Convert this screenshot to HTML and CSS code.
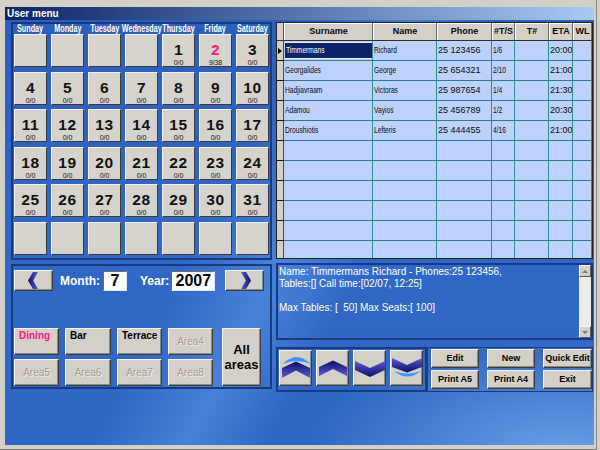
FILE: index.html
```html
<!DOCTYPE html>
<html>
<head>
<meta charset="utf-8">
<link rel="stylesheet" href="styles.css">
</head>
<body>
<div class="window">
  <div class="titlebar">User menu</div>
  <div class="content">
    <div class="leftcol">
      <div class="panel cal">
        <div class="dow">
          <div><span>Sunday</span></div><div><span>Monday</span></div><div><span>Tuesday</span></div><div><span>Wednesday</span></div><div><span>Thursday</span></div><div><span>Friday</span></div><div><span>Saturday</span></div>
        </div>
        <div class="days">
          <div class="day"></div><div class="day"></div><div class="day"></div><div class="day"></div>
          <div class="day"><b class="n">1</b><i class="c">0/0</i></div>
          <div class="day"><b class="n pink">2</b><i class="c">9/38</i></div>
          <div class="day"><b class="n">3</b><i class="c">0/0</i></div>
          <div class="day"><b class="n">4</b><i class="c">0/0</i></div>
          <div class="day"><b class="n">5</b><i class="c">0/0</i></div>
          <div class="day"><b class="n">6</b><i class="c">0/0</i></div>
          <div class="day"><b class="n">7</b><i class="c">0/0</i></div>
          <div class="day"><b class="n">8</b><i class="c">0/0</i></div>
          <div class="day"><b class="n">9</b><i class="c">0/0</i></div>
          <div class="day"><b class="n">10</b><i class="c">0/0</i></div>
          <div class="day"><b class="n">11</b><i class="c">0/0</i></div>
          <div class="day"><b class="n">12</b><i class="c">0/0</i></div>
          <div class="day"><b class="n">13</b><i class="c">0/0</i></div>
          <div class="day"><b class="n">14</b><i class="c">0/0</i></div>
          <div class="day"><b class="n">15</b><i class="c">0/0</i></div>
          <div class="day"><b class="n">16</b><i class="c">0/0</i></div>
          <div class="day"><b class="n">17</b><i class="c">0/0</i></div>
          <div class="day"><b class="n">18</b><i class="c">0/0</i></div>
          <div class="day"><b class="n">19</b><i class="c">0/0</i></div>
          <div class="day"><b class="n">20</b><i class="c">0/0</i></div>
          <div class="day"><b class="n">21</b><i class="c">0/0</i></div>
          <div class="day"><b class="n">22</b><i class="c">0/0</i></div>
          <div class="day"><b class="n">23</b><i class="c">0/0</i></div>
          <div class="day"><b class="n">24</b><i class="c">0/0</i></div>
          <div class="day"><b class="n">25</b><i class="c">0/0</i></div>
          <div class="day"><b class="n">26</b><i class="c">0/0</i></div>
          <div class="day"><b class="n">27</b><i class="c">0/0</i></div>
          <div class="day"><b class="n">28</b><i class="c">0/0</i></div>
          <div class="day"><b class="n">29</b><i class="c">0/0</i></div>
          <div class="day"><b class="n">30</b><i class="c">0/0</i></div>
          <div class="day"><b class="n">31</b><i class="c">0/0</i></div>
          <div class="day"></div><div class="day"></div><div class="day"></div><div class="day"></div><div class="day"></div><div class="day"></div><div class="day"></div>
        </div>
      </div>
      <div class="panel nav">
        <div class="navrow">
          <div class="btn arrowbtn">
            <svg width="10" height="17" viewBox="0 0 10 17"><defs><linearGradient id="gl" x1="0" x2="1" y1="0" y2="0"><stop offset="0" stop-color="#0a0a55"/><stop offset="1" stop-color="#5563e0"/></linearGradient></defs><path d="M5 0H10L5.2 8.5L10 17H5L0 8.5Z" fill="url(#gl)"/></svg>
          </div>
          <span class="lbl">Month:</span>
          <span class="box mbox">7</span>
          <span class="lbl ylbl">Year:</span>
          <span class="box ybox">2007</span>
          <div class="btn arrowbtn rbtn">
            <svg width="10" height="17" viewBox="0 0 10 17"><defs><linearGradient id="gr" x1="0" x2="1" y1="0" y2="0"><stop offset="0" stop-color="#5563e0"/><stop offset="1" stop-color="#0a0a55"/></linearGradient></defs><path d="M0 0H5L10 8.5L5 17H0L4.8 8.5Z" fill="url(#gr)"/></svg>
          </div>
        </div>
        <div class="areas">
          <div class="btn area on pinktxt">Dining</div>
          <div class="btn area on">Bar</div>
          <div class="btn area on">Terrace</div>
          <div class="btn area off">Area4</div>
          <div class="btn all">All<br>areas</div>
          <div class="btn area off">Area5</div>
          <div class="btn area off">Area6</div>
          <div class="btn area off">Area7</div>
          <div class="btn area off">Area8</div>
        </div>
      </div>
    </div>
    <div class="rightcol">
      <div class="tbl">
        <div class="row head">
          <div class="ind"></div><div>Surname</div><div>Name</div><div>Phone</div><div>#T/S</div><div>T#</div><div>ETA</div><div>WL</div>
        </div>
        <div class="row">
          <div class="ind"><span class="tri"></span></div>
          <div class="selcell"><div class="sel"><span class="cn">Timmermans</span></div></div>
          <div><span class="cn">Richard</span></div><div>25 123456</div><div><span class="cn">1/6</span></div><div></div><div>20:00</div><div></div>
        </div>
        <div class="row">
          <div class="ind"></div><div><span class="cn">Georgalides</span></div><div><span class="cn">George</span></div><div>25 654321</div><div><span class="cn">2/10</span></div><div></div><div>21:00</div><div></div>
        </div>
        <div class="row">
          <div class="ind"></div><div><span class="cn">Hadjiavraam</span></div><div><span class="cn">Victoras</span></div><div>25 987654</div><div><span class="cn">1/4</span></div><div></div><div>21:30</div><div></div>
        </div>
        <div class="row">
          <div class="ind"></div><div><span class="cn">Adamou</span></div><div><span class="cn">Vayios</span></div><div>25 456789</div><div><span class="cn">1/2</span></div><div></div><div>20:30</div><div></div>
        </div>
        <div class="row">
          <div class="ind"></div><div><span class="cn">Droushiotis</span></div><div><span class="cn">Lefteris</span></div><div>25 444455</div><div><span class="cn">4/16</span></div><div></div><div>21:00</div><div></div>
        </div>
        <div class="row"><div class="ind"></div><div></div><div></div><div></div><div></div><div></div><div></div><div></div></div>
        <div class="row"><div class="ind"></div><div></div><div></div><div></div><div></div><div></div><div></div><div></div></div>
        <div class="row"><div class="ind"></div><div></div><div></div><div></div><div></div><div></div><div></div><div></div></div>
        <div class="row"><div class="ind"></div><div></div><div></div><div></div><div></div><div></div><div></div><div></div></div>
        <div class="row"><div class="ind"></div><div></div><div></div><div></div><div></div><div></div><div></div><div></div></div>
        <div class="row"><div class="ind"></div><div></div><div></div><div></div><div></div><div></div><div></div><div></div></div>
      </div>
      <div class="panel info">
        <div class="infotext">Name: Timmermans Richard - Phones:25 123456,
Tables:[] Call time:[02/07, 12:25]

Max Tables: [  50] Max Seats:[ 100]</div>
        <div class="sbar">
          <div class="sbtn"><span class="up"></span></div>
          <div class="strack"></div>
          <div class="sbtn"><span class="dn"></span></div>
        </div>
      </div>
      <div class="bottom">
        <div class="panel arrows">
          <div class="btn chev">
            <svg width="31" height="34" viewBox="1 1 31 34"><defs><linearGradient id="g1" x1="0" x2="0" y1="0" y2="1"><stop offset="0" stop-color="#0c0c62"/><stop offset="1" stop-color="#5a5ad8"/></linearGradient></defs><path d="M4 14Q17.5 0 31.5 14Q17.5 8 4 14Z" fill="#3b95ff"/><path d="M3 18L17 11.5L31 18V28L17 20.5L3 28Z" fill="url(#g1)"/></svg>
          </div>
          <div class="btn chev">
            <svg width="31" height="34" viewBox="1 1 31 34"><defs><linearGradient id="g2" x1="0" x2="0" y1="0" y2="1"><stop offset="0" stop-color="#0c0c62"/><stop offset="1" stop-color="#5a5ad8"/></linearGradient></defs><path d="M3 17L17 10.5L31 17V26L17 19L3 26Z" fill="url(#g2)"/></svg>
          </div>
          <div class="btn chev">
            <svg width="31" height="34" viewBox="1 1 31 34"><defs><linearGradient id="g3" x1="0" x2="0" y1="0" y2="1"><stop offset="0" stop-color="#5a5ad8"/><stop offset="1" stop-color="#0c0c62"/></linearGradient></defs><path d="M2 11L17 18L32 11V20L17 27L2 20Z" fill="url(#g3)"/></svg>
          </div>
          <div class="btn chev">
            <svg width="31" height="34" viewBox="1 1 31 34"><defs><linearGradient id="g4" x1="0" x2="0" y1="0" y2="1"><stop offset="0" stop-color="#5a5ad8"/><stop offset="1" stop-color="#0c0c62"/></linearGradient></defs><path d="M2 8L17 15L32 8V17L17 22.5L2 17Z" fill="url(#g4)"/><path d="M4 21Q17 32 31 21Q17 26 4 21Z" fill="#3b95ff"/></svg>
          </div>
        </div>
        <div class="panel cmds">
          <div class="btn cmd">Edit</div>
          <div class="btn cmd">New</div>
          <div class="btn cmd">Quick Edit</div>
          <div class="btn cmd">Print A5</div>
          <div class="btn cmd">Print A4</div>
          <div class="btn cmd">Exit</div>
        </div>
      </div>
    </div>
  </div>
</div>
</body>
</html>
```
FILE: styles.css
```css
* { box-sizing: border-box; margin: 0; padding: 0; }
body {
  width: 600px; height: 450px; overflow: hidden;
  background: #d4d0c8;
  font-family: "Liberation Sans", Arial, sans-serif;
}
.window {
  height: 450px;
  display: flex; flex-direction: column;
  padding: 7px 6px 5px 5px;
  box-shadow: inset -3px 0 0 #d4d0c8, inset -4px 0 0 #8a8780, inset 0 -1px 0 #77746e;
}
.titlebar {
  height: 13px;
  background: linear-gradient(90deg, #0a246a, #a6caf0);
  color: #fff; font-weight: bold; font-size: 10px; line-height: 13px;
  padding-left: 2px;
}
.content {
  flex: 1;
  display: flex; gap: 4px;
  padding: 2px 0 0 6px;
  background:
    radial-gradient(ellipse 260px 110px at 560px 430px, rgba(150, 205, 255, .55), rgba(150, 205, 255, 0)),
    linear-gradient(118deg, rgba(120, 180, 255, 0) 38%, rgba(120, 180, 255, .35) 50%, rgba(120, 180, 255, 0) 60%),
    linear-gradient(180deg, #2c5ebc 0%, #3168c8 55%, #2f65c4 100%);
}
.leftcol { width: 261px; display: flex; flex-direction: column; gap: 4px; }
.rightcol { width: 317px; display: flex; flex-direction: column; }
.panel { border: 2px solid #173a82; }

/* calendar */
.cal { height: 238px; padding: 0 1px 3px 1px; }
.dow {
  display: grid; grid-template-columns: repeat(7, minmax(0, 1fr)); column-gap: 4px;
  height: 10px;
}
.dow div { display: flex; justify-content: center; min-width: 0; }
.dow span {
  flex: none;
  display: inline-block; color: #fff; font-weight: bold;
  font-size: 10px; line-height: 10px; white-space: nowrap;
  transform: scaleX(.72);
}
.days {
  display: grid; grid-template-columns: repeat(7, minmax(0, 1fr));
  grid-template-rows: repeat(6, 33px); gap: 4.6px 4px;
}
.day {
  background: #d6d3cc;
  border: 1px solid; border-color: #f2f0ea #3a3a3a #3a3a3a #f2f0ea;
  display: flex; flex-direction: column; justify-content: flex-end; align-items: center;
}
.n { font-size: 15.5px; line-height: 14px; margin-bottom: 2px; font-weight: bold; color: #111; letter-spacing: .6px; }
.n.pink { color: #ff1a8c; }
.c { font-style: normal; font-size: 7px; line-height: 7px; color: #111; letter-spacing: -0.1px; }

/* buttons */
.btn {
  background: #d4d0c8;
  border: 1px solid; border-color: #f6f5f0 #3c3c3c #3c3c3c #f6f5f0;
  box-shadow: inset -1px -1px 0 #8c8983;
}

/* nav */
.nav { height: 125px; display: flex; flex-direction: column; padding: 4px 6px 1px 1px; }
.navrow { display: flex; align-items: center; height: 21px; }
.arrowbtn { width: 39px; height: 21px; display: flex; align-items: center; justify-content: center; }
.arrowbtn svg { margin-left: -2px; }
.rbtn { margin-left: auto; }
.rbtn svg { margin-left: 2px; }
.lbl { color: #fff; font-weight: bold; font-size: 12px; margin-left: 7px; }
.ylbl { margin-left: 13px; }
.box {
  background: #fff; height: 20px; margin-left: 3px;
  border: 1px solid; border-color: #6c6c6c #e8e8e8 #e8e8e8 #6c6c6c;
  font-weight: bold; font-size: 16px; line-height: 18px; text-align: center; color: #000;
}
.mbox { width: 24px; }
.ybox { width: 44px; margin-left: 2px; }
.areas {
  margin-top: auto;
  display: grid; grid-template-columns: 45px 46px 45px 45px 42px;
  grid-template-rows: 27px 27px; gap: 4px 6px;
}
.area { font-size: 10px; line-height: 12px; }
.area.on { font-weight: bold; color: #000; padding: 1px 0 0 4px; }
.area.pinktxt { color: #ff1a8c; }
.area.off {
  color: #a29e96; text-shadow: 1px 1px 0 #f0eee8;
  display: flex; align-items: center; justify-content: center;
}
.all {
  grid-column: 5; grid-row: 1 / span 2; margin-left: 3px;
  display: flex; align-items: center; justify-content: center; text-align: center;
  font-weight: bold; font-size: 13px; line-height: 15px; color: #000;
}

/* table */
.tbl { height: 237px; border: 1px solid #222; overflow: hidden; background: #bdd2fb; }
.row {
  display: grid;
  grid-template-columns: 7px 89px 64px 55px 23px 34px 24px 19px;
  height: 20px;
}
.row > div {
  border-right: 1px solid #2a8f97; border-bottom: 1px solid #2b7d8c;
  font-size: 9px; line-height: 19px; color: #0a0a0a; padding-left: 1px;
  white-space: nowrap; overflow: hidden;
}
.row > .ind { background: #d4d0c8; border-right: 1px solid #4a4a4a; border-bottom: 1px solid #111; padding: 0; display: flex; align-items: center; }
.head { height: 18px; }
.head > div {
  background: #d4d0c8; text-align: center; font-weight: bold; font-size: 9px; line-height: 16px;
  border-right: 1px solid #6a6862; border-bottom: 1px solid #303030;
  box-shadow: inset 1px 1px 0 #fff;
}
.head > .ind { box-shadow: none; border-bottom: 1px solid #303030; }
.cn { display: inline-block; transform: scaleX(.74); transform-origin: left center; }
.tri { width: 0; height: 0; border-left: 4px solid #000; border-top: 3px solid transparent; border-bottom: 3px solid transparent; margin-left: 1px; }
.row > .selcell { padding: 1px 0 1px 1px; }
.sel {
  height: 17px; background: #0a246a; color: #fff;
  border-top: 1px solid #e4ecff; border-bottom: 1px solid #e4ecff;
  line-height: 15px; padding-left: 1px;
}

/* info */
.info { height: 77px; margin-top: 4px; display: flex; padding: 0 0 0 1px; }
.infotext {
  flex: 1; color: #fff; font-size: 10px; line-height: 12px;
  white-space: pre; padding-top: 1px;
}
.sbar { width: 12px; display: flex; flex-direction: column; background: #ecebe6; }
.sbtn {
  height: 12px; background: #d4d0c8;
  border: 1px solid; border-color: #f6f5f0 #5a5a5a #5a5a5a #f6f5f0;
  display: flex; align-items: center; justify-content: center;
}
.strack { flex: 1; }
.up { width: 0; height: 0; border-bottom: 3px solid #777; border-left: 3px solid transparent; border-right: 3px solid transparent; }
.dn { width: 0; height: 0; border-top: 3px solid #777; border-left: 3px solid transparent; border-right: 3px solid transparent; }

/* bottom */
.bottom { height: 45px; margin-top: 7px; display: flex; }
.arrows { width: 151px; display: flex; gap: 4px; padding: 1px; align-items: flex-start; }
.chev { width: 33px; height: 36px; display: flex; align-items: center; justify-content: center; }
.cmds {
  flex: 1; border-width: 1px; padding: 1px 0 0 3px;
  display: grid; grid-template-columns: 48px 48px 49px; grid-template-rows: 19px 19px;
  gap: 2px 8px;
}
.cmd {
  font-weight: bold; font-size: 9px; line-height: 17px; text-align: center; color: #000;
  white-space: nowrap;
}
```
